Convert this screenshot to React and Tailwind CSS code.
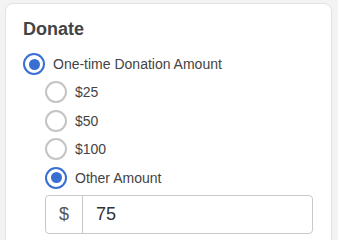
import { useState } from 'react';

const options = ['$25', '$50', '$100', 'Other Amount'];

function Radio({ checked }) {
  return (
    <span
      className={`flex h-[22px] w-[22px] shrink-0 items-center justify-center rounded-full border-2 bg-white ${
        checked ? 'border-[#3a6fd2]' : 'border-[#c4c4c4]'
      }`}
    >
      {checked && <span className="h-[11px] w-[11px] rounded-full bg-[#3a6fd2]" />}
    </span>
  );
}

export default function App() {
  const [amount, setAmount] = useState('Other Amount');
  const [other, setOther] = useState('75');

  return (
    <div className="h-[240px] overflow-hidden bg-[#f3f3f3] pl-[5px] pt-[3px] font-['Liberation_Sans',Arial,sans-serif]">
      <div className="h-[260px] w-[327px] rounded-lg border border-[#e2e2e2] bg-white px-[17px] pt-[14px]">
        <h2 className="text-[18px] leading-[22px] font-bold text-[#444]">Donate</h2>

        <label className="mt-[13px] flex h-[22px] cursor-pointer items-center gap-[8px]">
          <Radio checked />
          <span className="text-[14px] leading-[20px] text-[#444]">One-time Donation Amount</span>
        </label>

        <div className="pl-[22px]">
          {options.map((option) => (
            <label
              key={option}
              onClick={() => setAmount(option)}
              className="mt-[6.4px] flex h-[22px] cursor-pointer items-center gap-[8px]"
            >
              <Radio checked={amount === option} />
              <span className="text-[14px] leading-[20px] text-[#444]">{option}</span>
            </label>
          ))}

          <div className="mt-[6px] flex h-[39px] w-[268px] rounded-[4px] border border-[#c8c8c8]">
            <span className="flex w-[37px] items-center justify-center border-r border-[#c8c8c8] text-[18px] text-[#555]">
              $
            </span>
            <input
              value={other}
              onChange={(event) => setOther(event.target.value)}
              className="min-w-0 flex-1 bg-transparent pl-[13px] text-[18px] text-[#333] outline-none"
            />
          </div>
        </div>
      </div>
    </div>
  );
}
